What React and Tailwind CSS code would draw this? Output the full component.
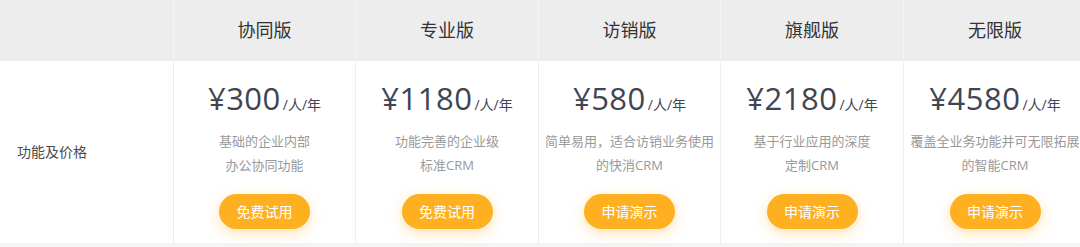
import React from "react";

const plans = [
  { name: "协同版", price: "300", desc: ["基础的企业内部", "办公协同功能"], btn: "免费试用" },
  { name: "专业版", price: "1180", desc: ["功能完善的企业级", "标准CRM"], btn: "免费试用" },
  { name: "访销版", price: "580", desc: ["简单易用，适合访销业务使用", "的快消CRM"], btn: "申请演示" },
  { name: "旗舰版", price: "2180", desc: ["基于行业应用的深度", "定制CRM"], btn: "申请演示" },
  { name: "无限版", price: "4580", desc: ["覆盖全业务功能并可无限拓展", "的智能CRM"], btn: "申请演示" },
];

const font = { fontFamily: '"Open Sans", "Noto Sans CJK SC", sans-serif' };

export default function App() {
  return (
    <div className="w-[1080px] h-[247px] bg-[#f4f4f4] overflow-hidden" style={font}>
      <div className="grid grid-cols-[173px_182px_183px_182px_183px_183px] w-[1086px] bg-white">
        <div className="h-[61px] bg-[#ededed]" />
        {plans.map((p) => (
          <div
            key={p.name}
            className="h-[61px] bg-[#ededed] border-l border-[#f3f3f3] flex items-center justify-center text-[18px] text-[#333] pb-[1px]"
          >
            {p.name}
          </div>
        ))}
        <div className="h-[182px] flex items-center pl-[17px] text-[14px] text-[#4a4a4a] pb-[2px]">
          功能及价格
        </div>
        {plans.map((p) => (
          <div
            key={p.name + "b"}
            className="h-[182px] border-l border-[#eeeeee] flex flex-col items-center pt-[17px]"
          >
            <div className="h-[40px] flex items-baseline text-[#3f4552]">
              <span className="text-[31px] leading-[40px] tracking-[0.5px]">¥{p.price}</span>
              <span className="text-[14px] ml-[2px]">/人/年</span>
            </div>
            <div className="mt-[11px] text-[13px] leading-[24px] text-[#999] text-center whitespace-nowrap">
              {p.desc[0]}
              <br />
              {p.desc[1]}
            </div>
            <button className="mt-[17px] w-[91px] h-[35px] rounded-full bg-[#ffb021] text-white text-[14px] shadow-[0_4px_14px_rgba(255,176,33,0.35)]">
              {p.btn}
            </button>
          </div>
        ))}
      </div>
    </div>
  );
}
